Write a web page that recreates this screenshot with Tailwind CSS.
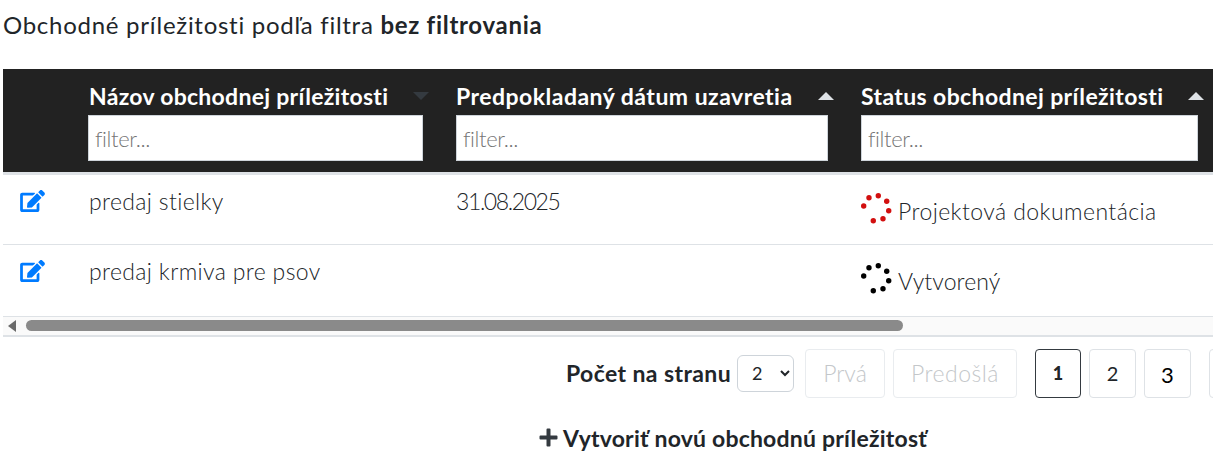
<!DOCTYPE html>
<html lang="sk">

<head>
    <meta charset="UTF-8">
    <title>Obchodné príležitosti</title>
    <script src="https://cdn.jsdelivr.net/npm/@tailwindcss/browser@4"></script>
</head>

<body class="bg-white overflow-hidden w-[1213px] h-[463px] font-['Lato','Open_Sans',sans-serif] text-[#212529]">

    <p class="pl-[3px] pt-[9px] h-[69px] text-[24px] tracking-[0.72px] leading-[32px]">Obchodné príležitosti podľa filtra <b class="font-bold">bez filtrovania</b></p>

    <div class="ml-[3px] overflow-hidden">
        <table class="table-fixed w-[1300px] border-collapse text-[23px] font-light">
            <colgroup>
                <col class="w-[69px]">
                <col class="w-[368px]">
                <col class="w-[405px]">
                <col class="w-[458px]">
            </colgroup>
            <thead class="bg-[#222222] text-white">
                <tr class="h-[101px] border-b-[3px] border-[#dee2e6]">
                    <th></th>
                    <th class="px-4 pt-[11px] pb-[11px] text-left align-top font-bold tracking-[0.28px]">
                        <div class="flex justify-between items-center w-[341px] h-[35px] pl-px">
                            <span class="leading-[30px] -mt-[3px]">Názov obchodnej príležitosti</span>
                            <span class="w-0 h-0 border-x-[8px] border-x-transparent border-t-[8px] border-t-[#343a40] -mt-[3px]"></span>
                        </div>
                        <input placeholder="filter..." class="block w-[335px] h-[46px] px-[6px] bg-white border border-[#ced4da] text-[22px] font-light tracking-[-0.4px] placeholder:text-[#757575]">
                    </th>
                    <th class="px-4 pt-[11px] pb-[11px] text-left align-top font-bold tracking-[0.48px]">
                        <div class="flex justify-between items-center w-[378px] h-[35px]">
                            <span class="leading-[30px] -mt-[3px]">Predpokladaný dátum uzavretia</span>
                            <span class="w-0 h-0 border-x-[8px] border-x-transparent border-b-[8px] border-b-[#dee2e6] -mt-[3px]"></span>
                        </div>
                        <input placeholder="filter..." class="block w-[372px] h-[46px] px-[6px] bg-white border border-[#ced4da] text-[22px] font-light tracking-[-0.4px] placeholder:text-[#757575]">
                    </th>
                    <th class="px-4 pt-[11px] pb-[11px] text-left align-top font-bold tracking-[0.38px]">
                        <div class="flex justify-between items-center w-[343px] h-[35px]">
                            <span class="leading-[30px] -mt-[3px]">Status obchodnej príležitosti</span>
                            <span class="w-0 h-0 border-x-[8px] border-x-transparent border-b-[8px] border-b-[#dee2e6] -mt-[3px]"></span>
                        </div>
                        <input placeholder="filter..." class="block w-[337px] h-[46px] px-[6px] bg-white border border-[#ced4da] text-[22px] font-light tracking-[-0.4px] placeholder:text-[#757575]">
                    </th>
                </tr>
            </thead>
            <tbody>
                <tr class="h-[71px] border-b border-[#dee2e6]">
                    <td class="align-top pl-[17px] pt-[15px]">
                        <svg class="w-[25px] h-[22px] text-[#007bff]" viewBox="0 0 576 512" fill="currentColor"><path d="M402.6 83.2l90.2 90.2c3.8 3.8 3.8 10 0 13.8L274.4 405.6l-92.8 10.3c-12.4 1.4-22.9-9.1-21.5-21.5l10.3-92.8L388.8 83.2c3.8-3.8 10-3.8 13.8 0zm162-22.9l-48.8-48.8c-15.2-15.2-39.9-15.2-55.2 0l-35.4 35.4c-3.8 3.8-3.8 10 0 13.8l90.2 90.2c3.8 3.8 10 3.8 13.8 0l35.4-35.4c15.2-15.3 15.2-40 0-55.2zM384 346.2V448H64V128h229.8c3.2 0 6.2-1.3 8.5-3.5l40-40c7.6-7.6 2.2-20.5-8.5-20.5H48C21.5 64 0 85.5 0 112v352c0 26.5 21.5 48 48 48h352c26.5 0 48-21.5 48-48V306.2c0-10.7-12.9-16-20.5-8.5l-40 40c-2.2 2.3-3.5 5.3-3.5 8.5z"/></svg>
                    </td>
                    <td class="align-top px-4 pt-[11px] leading-[30px] pl-[17px] tracking-[0.36px]">predaj stielky</td>
                    <td class="align-top px-4 pt-[11px] leading-[30px] tracking-[-1.4px]">31.08.2025</td>
                    <td class="align-top px-4 pt-[21px] leading-[30px] tracking-[0.43px]">
                        <div class="flex items-center gap-[6px] -ml-[1px]">
                            <svg class="w-[32px] h-[32px] text-[#d20f0f] shrink-0 -mt-[4px]" viewBox="0 0 32 32" fill="currentColor"><circle cx="9" cy="4.7" r="2.7"/><circle cx="18.3" cy="2.7" r="2.7"/><circle cx="26.7" cy="8.3" r="2.7"/><circle cx="28.7" cy="17.7" r="2.7"/><circle cx="23" cy="25.7" r="2.7"/><circle cx="13.3" cy="27.7" r="2.7"/><circle cx="3.7" cy="13" r="2.7"/></svg>
                            <span>Projektová dokumentácia</span>
                        </div>
                    </td>
                </tr>
                <tr class="h-[71px]">
                    <td class="align-top pl-[17px] pt-[15px]">
                        <svg class="w-[25px] h-[22px] text-[#007bff]" viewBox="0 0 576 512" fill="currentColor"><path d="M402.6 83.2l90.2 90.2c3.8 3.8 3.8 10 0 13.8L274.4 405.6l-92.8 10.3c-12.4 1.4-22.9-9.1-21.5-21.5l10.3-92.8L388.8 83.2c3.8-3.8 10-3.8 13.8 0zm162-22.9l-48.8-48.8c-15.2-15.2-39.9-15.2-55.2 0l-35.4 35.4c-3.8 3.8-3.8 10 0 13.8l90.2 90.2c3.8 3.8 10 3.8 13.8 0l35.4-35.4c15.2-15.3 15.2-40 0-55.2zM384 346.2V448H64V128h229.8c3.2 0 6.2-1.3 8.5-3.5l40-40c7.6-7.6 2.2-20.5-8.5-20.5H48C21.5 64 0 85.5 0 112v352c0 26.5 21.5 48 48 48h352c26.5 0 48-21.5 48-48V306.2c0-10.7-12.9-16-20.5-8.5l-40 40c-2.2 2.3-3.5 5.3-3.5 8.5z"/></svg>
                    </td>
                    <td class="align-top px-4 pt-[11px] leading-[30px] pl-[17px] tracking-[0.36px]">predaj krmiva pre psov</td>
                    <td></td>
                    <td class="align-top px-4 pt-[21px] leading-[30px] tracking-[0.1px]">
                        <div class="flex items-center gap-[6px] -ml-[1px]">
                            <svg class="w-[32px] h-[32px] text-black shrink-0 -mt-[4px]" viewBox="0 0 32 32" fill="currentColor"><circle cx="9" cy="4.7" r="2.7"/><circle cx="18.3" cy="2.7" r="2.7"/><circle cx="26.7" cy="8.3" r="2.7"/><circle cx="28.7" cy="17.7" r="2.7"/><circle cx="23" cy="25.7" r="2.7"/><circle cx="13.3" cy="27.7" r="2.7"/><circle cx="3.7" cy="13" r="2.7"/></svg>
                            <span>Vytvorený</span>
                        </div>
                    </td>
                </tr>
            </tbody>
        </table>
    </div>

    <!-- scrollbar -->
    <div class="ml-[3px] h-[21px] bg-[#fafafa] border-y-[1px] border-t-[#dee2e6] border-b-[2px] border-b-[#dee2e6] flex items-center">
        <span class="ml-[5px] w-0 h-0 border-y-[6px] border-y-transparent border-r-[8px] border-r-[#6b6b6b]"></span>
        <span class="ml-[10px] w-[877px] h-[11px] rounded-full bg-[#8a8a8a]"></span>
    </div>

    <div class="flex items-center pl-[566px] pt-[12px] h-[61px] w-[1300px]">
        <span class="w-[171px] text-[23px] font-bold tracking-[0.4px]">Počet na stranu</span>
        <select class="w-[57px] h-[37px] pl-[10px] border border-[#ced4da] rounded-md bg-white text-[18px]">
            <option>2</option>
        </select>
        <button class="ml-[11px] w-[80px] h-[49px] border border-[#e9ecef] rounded text-[23px] font-light text-[#c4c7ca]">Prvá</button>
        <button class="ml-[8px] w-[124px] h-[49px] border border-[#e9ecef] rounded text-[23px] font-light text-[#c4c7ca] tracking-[0.5px]">Predošlá</button>
        <button class="ml-[18px] w-[46px] h-[49px] border border-[#343a40] rounded font-black text-[18px]">1</button>
        <button class="ml-[8px] w-[47px] h-[49px] border border-[#dee2e6] rounded text-[20px]">2</button>
        <button class="ml-[8px] w-[47px] h-[49px] border border-[#dee2e6] rounded text-[22px] pt-[3px] text-black">3</button>
        <button class="ml-[18px] w-[47px] h-[49px] border border-[#dee2e6] rounded text-[20px]"></button>
    </div>

    <div class="flex items-center pl-[539px] pt-[25px] text-[23px] font-bold tracking-[0.2px] leading-[30px]">
        <svg class="w-[19px] h-[19px] mr-[5px] text-[#343a40]" viewBox="0 0 19 19" fill="currentColor"><path d="M7.5 1.5a1 1 0 0 1 1-1h2a1 1 0 0 1 1 1v6h6a1 1 0 0 1 1 1v2a1 1 0 0 1-1 1h-6v6a1 1 0 0 1-1 1h-2a1 1 0 0 1-1-1v-6h-6a1 1 0 0 1-1-1v-2a1 1 0 0 1 1-1h6z"/></svg>
        <span>Vytvoriť novú obchodnú príležitosť</span>
    </div>

</body>

</html>
